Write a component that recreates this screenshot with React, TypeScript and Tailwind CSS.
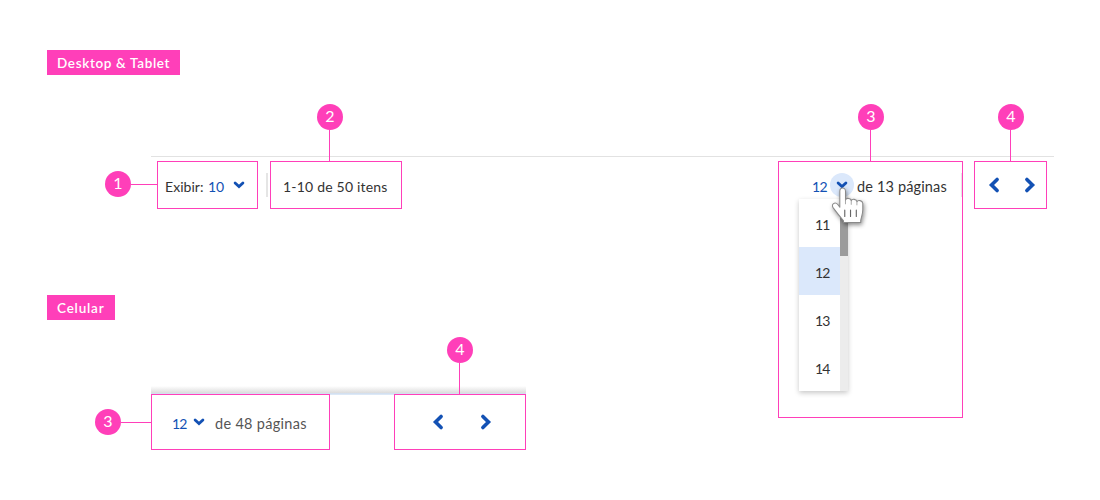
import type { ReactNode } from "react";

type Side = "top" | "left";

function Tag({ className, children }: { className: string; children: ReactNode }) {
  return (
    <h2 className={`flex h-[25px] items-center whitespace-nowrap bg-[#ff3fb9] pl-2.5 pt-px text-[13.5px] font-semibold text-white ${className}`}>
      {children}
    </h2>
  );
}

function Marker({ n, side, className }: { n: number; side: Side; className: string }) {
  const direction = side === "top" ? "flex-col" : "flex-row";
  const line = side === "top" ? "mr-px w-px" : "h-px";
  return (
    <div className={`absolute flex items-center ${direction} ${className}`}>
      <span className="flex size-[26px] shrink-0 items-center justify-center rounded-full bg-[#ff3fb9] pb-0.5 text-base leading-none text-white">
        {n}
      </span>
      <span className={`grow bg-[#ff3fb9] ${line}`} />
    </div>
  );
}

function Frame({ className, children }: { className: string; children: ReactNode }) {
  return <div className={`relative flex shrink-0 border border-[#ff3fb9] ${className}`}>{children}</div>;
}

function ChevronDown({ className = "" }: { className?: string }) {
  return (
    <svg className={`shrink-0 ${className}`} width="12" height="8" viewBox="0 0 12 8" fill="none" stroke="#1351b4" strokeWidth="2.8" strokeLinecap="round" strokeLinejoin="miter">
      <path d="M2.1 2 6 5.6 9.9 2" />
    </svg>
  );
}

function ChevronSide({ right = false, className = "" }: { right?: boolean; className?: string }) {
  return (
    <svg className={`shrink-0 ${className}`} width="12" height="18" viewBox="0 0 12 18" fill="none" stroke="#1351b4" strokeWidth="3.6" strokeLinecap="round" strokeLinejoin="miter">
      <path d={right ? "M2.9 3.4 8.5 9 2.9 14.6" : "M9.1 3.4 3.5 9 9.1 14.6"} />
    </svg>
  );
}

function Hand({ className }: { className: string }) {
  return (
    <svg className={`absolute drop-shadow-[1px_2px_2px_rgba(0,0,0,0.45)] ${className}`} width="35" height="40" viewBox="0 0 34 38" preserveAspectRatio="none" fill="none">
      <path
        d="M7.6 4c0-4 5.5-4 5.5 0v8.5c.4-2.4 5.3-2.2 5.6.5.8-2 5.2-1.6 5.5 1 1.1-2.1 5.2-1.2 5.7 1.5v6c0 4.3-1.6 7.5-2 10.2v2H11.2v-1.5L5.7 25.5 1.2 19.8c-2.4-3.4 1.7-6.4 4.4-3.2l2 2.6Z"
        fill="white"
        stroke="#8a8a8a"
        strokeWidth="1"
        strokeLinejoin="round"
      />
      <path d="M13.1 12v4M18.7 13V16.5M24.2 14.5v2.5" stroke="#999" strokeWidth="0.8" strokeLinecap="round" />
      <path d="M12.4 22v6M18 22v6M23.6 22v6" stroke="#666" strokeWidth="1.1" strokeLinecap="round" />
    </svg>
  );
}

function PageMenu() {
  return (
    <div className="absolute left-5 top-[37px] flex h-[192px] w-[49px] bg-white text-sm text-[#333] shadow-[0_2px_5px_rgba(0,0,0,0.22)]">
      <ul className="w-[41px]">
        {[11, 12, 13, 14].map((page) => (
          <li key={page} className={`flex h-12 items-center pl-4 pt-1 tracking-[-0.9px] ${page === 12 ? "bg-[#dbe8fb]" : ""}`}>
            {page}
          </li>
        ))}
      </ul>
      <div className="w-2 bg-[#ececec]">
        <div className="h-[57px] bg-[#9b9b9b]" />
      </div>
    </div>
  );
}

export default function App() {
  return (
    <main className="h-[500px] w-[1100px] overflow-hidden bg-white pt-[50px] font-['Lato','Open_Sans',sans-serif] text-[#333]">
      <section className="h-[245px] pl-[47px]">
        <Tag className="w-[133px] tracking-[0.65px]">Desktop &amp; Tablet</Tag>
        <div className="ml-[104px] mt-[81px] flex w-[903px] items-start border-t border-[#e2e2e2] pl-1.5 pt-1 text-sm">
          <Frame className="h-12 w-[101px] items-center pl-[7px] pt-1">
            <span className="w-[43px] tracking-[0.05px]">Exibir:</span>
            <span className="w-[25px] text-[#1351b4]">10</span>
            <ChevronDown className="mb-1" />
            <Marker n={1} side="left" className="-left-[53px] top-[9px] w-[53px]" />
          </Frame>
          <span className="ml-2 mr-0.5 mt-3 h-6 w-0.5 bg-[#e5e5e5]" />
          <Frame className="h-12 w-[132px] items-center pl-3 pt-1">
            <span className="whitespace-nowrap tracking-[0.2px]">1-10 de 50 itens</span>
            <Marker n={2} side="top" className="-top-[58px] left-[46px] h-[58px]" />
          </Frame>
          <Frame className="ml-auto mr-[11px] h-[257px] w-[185px] items-start pl-[33px]">
            <span className="w-[18px] pt-[15px] tracking-[-0.7px] text-[#1351b4]">12</span>
            <span className="mt-[11px] flex size-6 items-center justify-center rounded-full bg-[#dbe8fb]">
              <ChevronDown />
            </span>
            <span className="ml-[3px] whitespace-nowrap pt-[15px] text-[14.5px] leading-5 tracking-[0.15px]">de 13 páginas</span>
            <span className="ml-auto mt-[11px] h-6 w-px bg-[#e5e5e5]" />
            <Marker n={3} side="top" className="-top-[58px] left-[79px] h-[58px]" />
            <PageMenu />
            <Hand className="left-[53px] top-[25px]" />
          </Frame>
          <Frame className="mr-[7px] h-12 w-[73px] items-center pl-[13px]">
            <ChevronSide className="mr-6" />
            <ChevronSide right />
            <Marker n={4} side="top" className="-top-[58px] left-[23px] h-[58px]" />
          </Frame>
        </div>
      </section>
      <section className="pl-[47px]">
        <Tag className="w-[68px] tracking-[0.8px]">Celular</Tag>
        <div className="ml-[104px] mt-[66px] w-[375px] text-sm">
          <div className="h-2 border-b border-[#d3e0f0] bg-linear-to-b from-white to-[#dcdcdc]" />
          <div className="flex justify-between">
            <Frame className="h-14 w-[179px] items-center pl-5 pt-1">
              <span className="w-[21px] tracking-[-0.8px] text-[#1351b4]">12</span>
              <ChevronDown className="mb-1 mr-[10px]" />
              <span className="whitespace-nowrap text-[14.5px] tracking-[0.3px] text-[#555]">de 48 páginas</span>
              <Marker n={3} side="left" className="-left-[57px] top-[14px] w-[57px]" />
            </Frame>
            <div className="h-px grow bg-[#dce8f6]" />
            <Frame className="h-14 w-[132px] items-center pl-[37px]">
              <ChevronSide className="mr-9" />
              <ChevronSide right />
              <Marker n={4} side="top" className="-top-[58px] left-[52px] h-[58px]" />
            </Frame>
          </div>
        </div>
      </section>
    </main>
  );
}
